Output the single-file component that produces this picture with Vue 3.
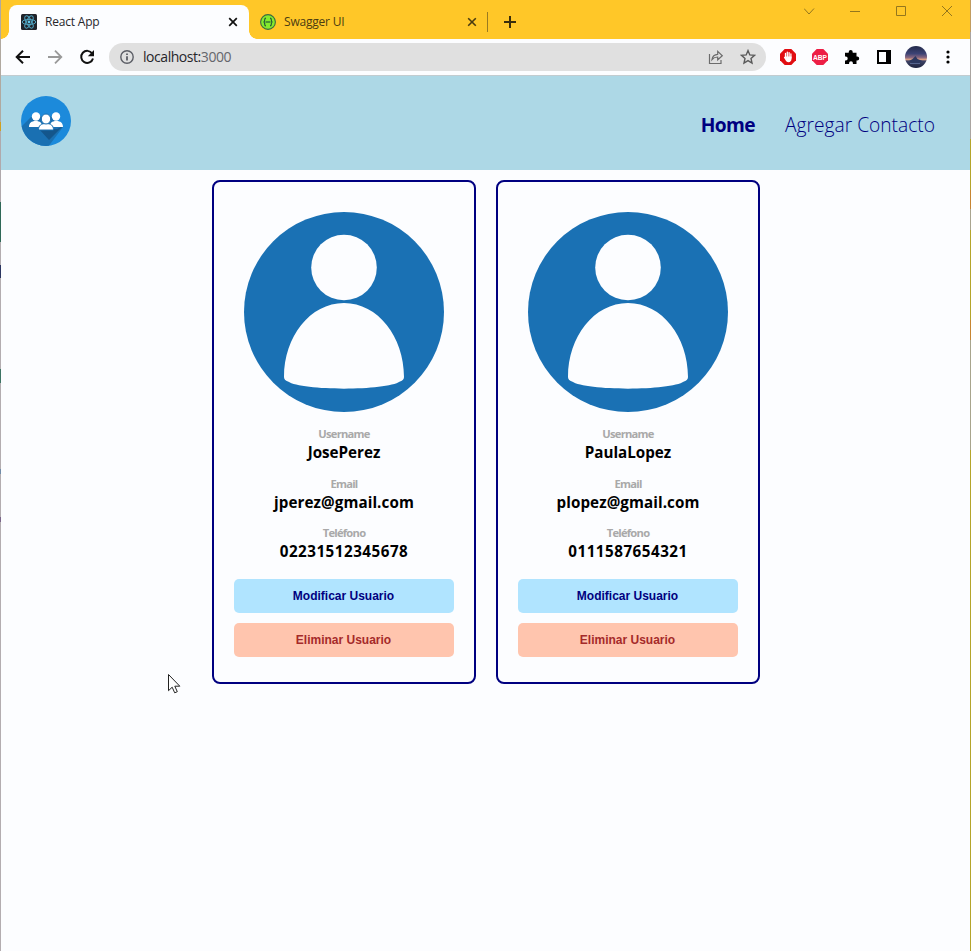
<script setup>
const users = [
  { id: 1, username: 'JosePerez', email: 'jperez@gmail.com', phone: '02231512345678' },
  { id: 2, username: 'PaulaLopez', email: 'plopez@gmail.com', phone: '0111587654321' },
]
</script>

<template>
  <div class="window">
    <div class="tabstrip">
      <div class="tab active">
        <svg class="fav" viewBox="0 0 16 16">
          <rect width="16" height="16" rx="1.5" fill="#20232a" />
          <g fill="none" stroke="#4fa3c0" stroke-width="1">
            <ellipse cx="8" cy="8" rx="6.8" ry="2.6" />
            <ellipse cx="8" cy="8" rx="6.8" ry="2.6" transform="rotate(60 8 8)" />
            <ellipse cx="8" cy="8" rx="6.8" ry="2.6" transform="rotate(120 8 8)" />
          </g>
          <circle cx="8" cy="8" r="1.4" fill="#61c8ea" />
        </svg>
        <span class="tab-title first">React App</span>
        <svg class="close" viewBox="0 0 10 10"><path d="M1.2 1.2l7.6 7.6M8.8 1.2L1.2 8.8" stroke="#111" stroke-width="1.7" /></svg>
      </div>
      <div class="tab">
        <svg class="fav" viewBox="0 0 16 16">
          <circle cx="8" cy="8" r="7.4" fill="#85ea2d" stroke="#3d6b3f" stroke-width="1.1" />
          <path d="M6 4.2c-1.2 0-1.3.5-1.3 1.6S4.5 8 3.5 8c1 0 1.2 1.1 1.2 2.2s.1 1.6 1.3 1.6M10 4.2c1.2 0 1.3.5 1.3 1.6S11.5 8 12.5 8c-1 0-1.2 1.1-1.2 2.2s-.1 1.6-1.3 1.6" fill="none" stroke="#235b35" stroke-width="1.2" />
          <path d="M5.5 8h5" stroke="#235b35" stroke-width="1.2" />
        </svg>
        <span class="tab-title second">Swagger UI</span>
        <svg class="close" viewBox="0 0 10 10"><path d="M1.2 1.2l7.6 7.6M8.8 1.2L1.2 8.8" stroke="#4a3b10" stroke-width="1.6" /></svg>
      </div>
      <i class="divider"></i>
      <svg class="plus" viewBox="0 0 12 12"><path d="M6 0v12M0 6h12" stroke="#3a2e0c" stroke-width="2" /></svg>
      <svg class="controls" viewBox="0 0 150 14">
        <g fill="none" stroke="#94761d" stroke-width="1">
          <path d="M0 3.500l5 5.500 5-5.500M46 6.500h10M92.500 1.500h9v9h-9zM138 1l10 10M148 1l-10 10" />
        </g>
      </svg>
    </div>

    <div class="toolbar">
      <div class="nav-icons">
        <svg viewBox="0 0 16 16"><path d="M15 8H2M8 1.7L1.7 8 8 14.3" fill="none" stroke="#111" stroke-width="2" /></svg>
        <svg viewBox="0 0 16 16"><path d="M1 8h13M8 1.7L14.3 8 8 14.3" fill="none" stroke="#999" stroke-width="1.8" /></svg>
        <svg viewBox="0 0 16 16"><path d="M13.2 4.5A6 6 0 1 0 14 9.5" fill="none" stroke="#111" stroke-width="2" /><path d="M15 1v6.200H8.800z" fill="#111" /></svg>
      </div>
      <div class="omnibox">
        <svg class="info" viewBox="0 0 14 14"><circle cx="7" cy="7" r="6.2" fill="none" stroke="#5c5e66" stroke-width="1.4" /><path d="M7 6.2v4.200M7 3.400v1.600" stroke="#5c5e66" stroke-width="1.8" /></svg>
        <span class="url">localhost:<em>3000</em></span>
        <svg class="share" viewBox="0 0 16 16"><path d="M1.500 5v9.500h11.500V11M4 10.500C4.500 7.200 6.500 5.500 9.700 5.300V2.300L14.300 6.700 9.700 10.800V8C7.400 8 5.500 8.700 4 10.500z" fill="none" stroke="#6c6c6c" stroke-width="1.2" /></svg>
        <svg class="star" viewBox="0 0 16 16"><path d="M8 1.600l1.800 4.300 4.700.4-3.500 3.100 1 4.600L8 11.600 4 14l1-4.600L1.500 6.300l4.700-.4z" fill="none" stroke="#5a5a5a" stroke-width="1.4" /></svg>
      </div>
      <div class="extensions">
        <svg class="ext" viewBox="0 0 16 16">
          <path d="M4.700 0h6.600L16 4.700v6.600L11.300 16H4.700L0 11.300V4.700z" fill="#e10d12" />
          <path d="M5.500 8.500V4.500M7.300 8V3.200M9.100 8V3.600M10.900 9V5" stroke="#fff" stroke-width="1.3" stroke-linecap="round" />
          <path d="M4.900 7.500h6.600V10c0 2-1.200 3.200-3 3.200-1.600 0-2.400-.8-3-2.200l-1.700-2.400z" fill="#fff" />
        </svg>
        <svg class="ext" viewBox="0 0 16 16">
          <path d="M4.700 0h6.600L16 4.700v6.600L11.300 16H4.700L0 11.300V4.700z" fill="#ed1e45" />
          <text x="1" y="10.800" class="abp" textLength="14" lengthAdjust="spacingAndGlyphs">ABP</text>
        </svg>
        <svg class="ext" viewBox="0 0 16 16"><path d="M1 3.700h3.700V3a2 2 0 0 1 4 0v.7h3.800v3.800h.7a2 2 0 0 1 0 4h-.7V15H8.900v-.9a1.900 1.900 0 0 0-3.800 0v.9H1v-3.600h.8a1.900 1.900 0 0 0 0-3.800H1z" fill="#000" /></svg>
        <svg class="ext" viewBox="0 0 16 16"><path d="M2 2h12v12H2z" fill="none" stroke="#000" stroke-width="2" /><path d="M10 1h5v14h-5z" /></svg>
        <svg class="avatar" viewBox="0 0 22 22">
          <defs>
            <linearGradient id="dusk" x1="0" y1="0" x2="0" y2="1">
              <stop offset="0" stop-color="#232a4b" /><stop offset=".35" stop-color="#3c4375" />
              <stop offset=".52" stop-color="#866680" /><stop offset=".62" stop-color="#dda082" />
              <stop offset=".68" stop-color="#3f4468" /><stop offset="1" stop-color="#1b223d" />
            </linearGradient>
          </defs>
          <circle cx="11" cy="11" r="11" fill="url(#dusk)" />
          <path d="M4 15l3.500-2 3-3 2 3 5 2-4 2H7z" fill="#2b3860" />
          <path d="M5 17.500h10" stroke="#55658f" />
        </svg>
        <svg class="dots" viewBox="0 0 4 14"><circle cx="2" cy="2" r="1.600" /><circle cx="2" cy="7" r="1.600" /><circle cx="2" cy="12" r="1.600" /></svg>
      </div>
    </div>

    <header class="header">
      <svg class="logo" viewBox="0 0 50 50">
        <clipPath id="disc"><circle cx="25" cy="25" r="25" /></clipPath>
        <g clip-path="url(#disc)">
          <path d="M0 0h50v50H0z" fill="#1c8adb" />
          <path d="M11 20L-4 35l28 20L42 31 30 20z" fill="#1a70b2" />
          <path d="M18 33h18l6-3-14 14z" fill="#14568c" />
        </g>
        <g fill="#fff">
          <circle cx="15" cy="20.500" r="4.200" /><circle cx="35" cy="20.500" r="4.200" />
          <path d="M8 31c0-4 2.500-6 6.500-6 5 0 6.500 2 6.500 6zM42 31c0-4-2.500-6-6.500-6-5 0-6.500 2-6.500 6z" />
        </g>
        <g fill="#fff" stroke="#1a70b2" stroke-width="1">
          <path d="M17.500 34c0-4.500 2.500-6.500 7.500-6.500s7.500 2 7.500 6.500z" />
          <ellipse cx="25" cy="23" rx="4.700" ry="5" />
        </g>
      </svg>
      <nav class="links">
        <a class="home">Home</a>
        <a class="add">Agregar Contacto</a>
      </nav>
    </header>

    <main class="cards">
      <article v-for="user in users" :key="user.id" class="card">
        <svg class="portrait" viewBox="0 0 200 200">
          <circle cx="100" cy="100" r="100" fill="#1a71b4" />
          <circle cx="100" cy="55.500" r="32.800" fill="#fcfdff" />
          <path d="M100 91C134 91 160 125 160 165Q160 168 156 169.500C142 179 58 179 44 169.500Q40 168 40 165C40 125 66 91 100 91z" fill="#fcfdff" />
        </svg>
        <div class="field"><span class="label">Username</span><strong>{{ user.username }}</strong></div>
        <div class="field"><span class="label">Email</span><strong class="email">{{ user.email }}</strong></div>
        <div class="field"><span class="label">Teléfono</span><strong class="phone">{{ user.phone }}</strong></div>
        <div class="actions">
          <button class="edit">Modificar Usuario</button>
          <button class="delete">Eliminar Usuario</button>
        </div>
      </article>
    </main>

    <svg class="cursor" viewBox="0 0 13 20"><path d="M.5.500v16.200l3.700-3.500 2.500 5.600 2.600-1.100-2.500-5.500h5z" fill="#fff" stroke="#222" /></svg>
    <i class="edge left"></i>
    <i class="edge right"></i>
  </div>
</template>

<style>
body { margin: 0; background: #fcfdff; overflow: hidden; }
</style>

<style scoped>
* { box-sizing: border-box; }
svg { display: block; flex: none; }
.window { position: relative; width: 971px; height: 951px; padding-left: 1px; background: #fcfdff; overflow: hidden; font-family: "Open Sans", "Noto Sans", sans-serif; }

.tabstrip { display: flex; height: 39px; padding: 5px 17px 0 8px; background: #ffc728; }
.tab { display: flex; align-items: center; width: 238px; height: 34px; padding: 0 10px 0 11px; position: relative; }
.tab.active { width: 240px; padding: 0 11px 0 12px; background: #fcfdff; border-radius: 8px 8px 0 0; }
.tab.active::before, .tab.active::after { content: ""; position: absolute; bottom: 0; width: 8px; height: 8px; }
.tab.active::before { left: -8px; background: radial-gradient(circle at 0 0, #ffc728 7.5px, #fcfdff 8px); }
.tab.active::after { right: -8px; background: radial-gradient(circle at 100% 0, #ffc728 7.5px, #fcfdff 8px); }
.fav { width: 16px; height: 16px; }
.tab-title { margin-left: 8px; font-size: 12px; line-height: 16px; color: #26262a; white-space: nowrap; letter-spacing: -0.2px; }
.tab-title.second { color: #4c3d12; }
.close { width: 10px; height: 10px; margin-left: auto; }
.divider { width: 1px; height: 20px; margin-top: 7px; background: #9a7a20; }
.plus { width: 12px; height: 12px; margin: 11px 0 0 16px; }
.controls { width: 150px; height: 14px; margin-left: auto; }

.toolbar { display: flex; align-items: center; height: 37px; padding: 0 20px 0 14px; background: #fcfdff; border-bottom: 1px solid #c2ccd0; }
.nav-icons { display: flex; gap: 16px; }
.nav-icons svg { width: 16px; height: 16px; }
.omnibox { display: flex; align-items: center; width: 657px; height: 28px; margin-left: 14px; padding: 0 10px 0 11px; border-radius: 14px; background: #e0e0e0; }
.info { width: 14px; height: 14px; }
.url { margin-left: 9px; font-size: 14px; line-height: 20px; letter-spacing: -0.45px; color: #26262a; }
.url em { font-style: normal; color: #65666c; }
.share { width: 16px; height: 16px; margin-left: auto; }
.star { width: 16px; height: 16px; margin-left: 16px; }
.extensions { display: flex; align-items: center; gap: 16px; margin-left: 14px; }
.ext { width: 16px; height: 16px; overflow: visible; }
.abp { font: bold 7.5px "Liberation Sans", sans-serif; fill: #fff; }
.avatar { width: 22px; height: 22px; margin-left: -3px; }
.dots { width: 4px; height: 14px; margin-left: 3px; }

.header { display: flex; justify-content: space-between; height: 94px; padding: 20px 36px 0 20px; background: #add8e6; }
.logo { width: 50px; height: 50px; }
.links { display: flex; gap: 30px; height: 56px; align-items: center; font-size: 19.2px; color: #000080; white-space: nowrap; }
.home { font-weight: 700; letter-spacing: -0.6px; }
.add { font-weight: 300; }

.cards { display: flex; justify-content: center; gap: 20px; padding-top: 10px; }
.card { display: flex; flex-direction: column; align-items: center; width: 264px; height: 504px; padding-top: 30px; border: 2px solid #000080; border-radius: 8px; }
.portrait { width: 200px; height: 200px; margin-bottom: 14px; }
.field { display: flex; flex-direction: column; align-items: center; height: 49.5px; }
.label { font-size: 11.2px; line-height: 16px; font-weight: 700; color: #a9a9a9; letter-spacing: -0.75px; }
.field strong { font-size: 15.2px; line-height: 20px; font-weight: 700; color: #000; }
.field .email { letter-spacing: 0.08px; }
.field .phone { letter-spacing: 0.5px; }
.actions { display: flex; flex-direction: column; gap: 10px; width: 220px; margin-top: 4.5px; }
button { height: 34px; padding: 0 1px 0 0; border: 0; border-radius: 5px; font: bold 12px "Liberation Sans", Arial, sans-serif; }
.edit { background: #b0e4ff; color: #000080; }
.delete { background: #ffc5ae; color: #a52a2a; }

.cursor { position: absolute; left: 168px; top: 674px; width: 13px; height: 20px; }
.edge { position: absolute; top: 0; width: 1px; height: 951px; }
.left { left: 0; background: linear-gradient(#b0a9a0 0 122px, #d0a020 122px 131px, #b0a9ac 131px 202px, #2f6857 202px 242px, #b3adb0 242px 265px, #2b3560 265px 278px, #b3adb0 278px 369px, #3d7464 369px 383px, #b3adb0 383px 469px, #718ca8 469px 474px, #b3adb0 474px 517px, #796589 517px 522px, #b3adb0 522px); }
.right { right: 0; background: linear-gradient(#c19c60 0 32px, #aaa4a0 32px 139px, #b5a52a 139px 190px, #c78532 190px 209px, #aaa58f 209px 230px, #b5a52a 230px 320px, #c78532 320px 340px, #a8a48c 340px 450px, #b5a52a 450px); }
</style>
